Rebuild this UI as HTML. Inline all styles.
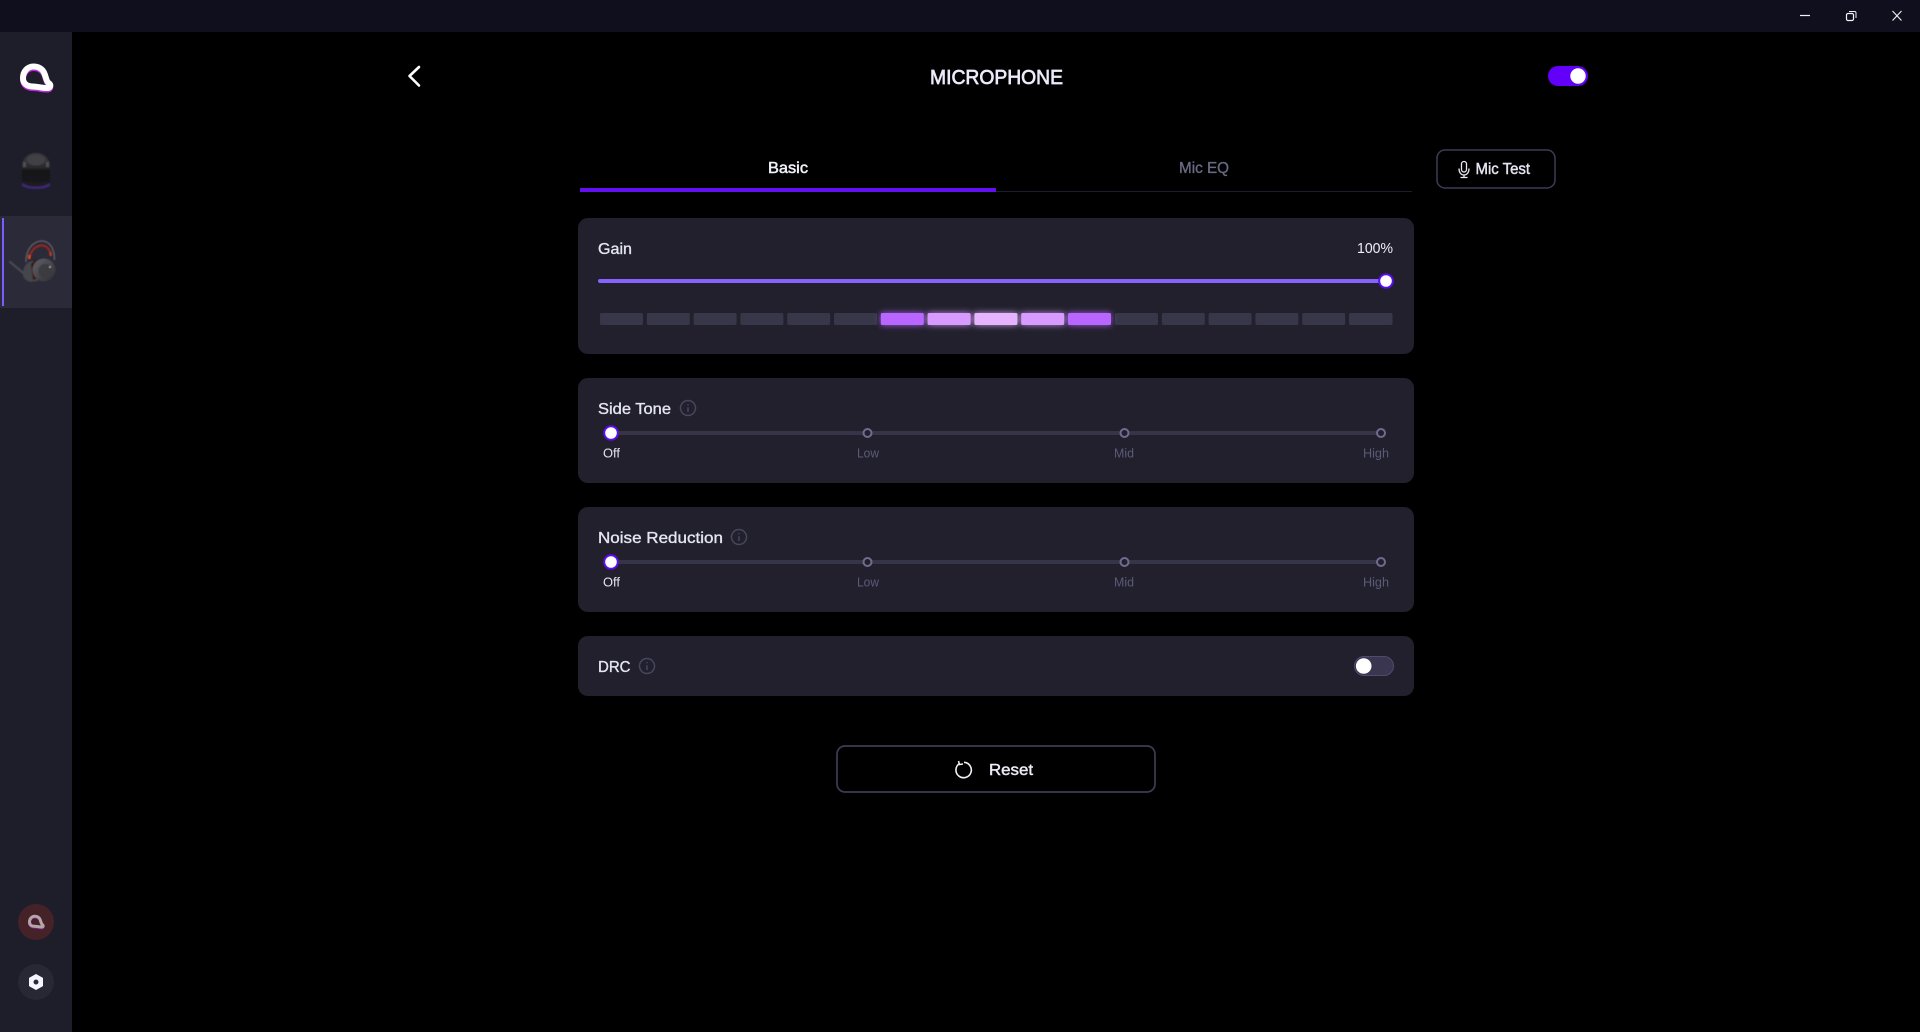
<!DOCTYPE html>
<html lang="en">
<head>
<meta charset="utf-8">
<title>Microphone</title>
<style>
html,body{margin:0;padding:0;background:#000;width:1920px;height:1032px;overflow:hidden}
svg{display:block}
text{font-family:"Liberation Sans",sans-serif}
.m{stroke-width:.35}
</style>
</head>
<body>
<svg width="1920" height="1032" viewBox="0 0 1920 1032" xmlns="http://www.w3.org/2000/svg">
<defs>
<filter id="g" x="-40%" y="-120%" width="180%" height="340%"><feGaussianBlur stdDeviation="3.500"/></filter>
<filter id="b1" x="-20%" y="-20%" width="140%" height="140%"><feGaussianBlur stdDeviation=".5"/></filter>
<linearGradient id="sp" x1="0" y1="0" x2="0" y2="1"><stop offset="0" stop-color="#38383c"/><stop offset=".42" stop-color="#2a2a2e"/><stop offset=".55" stop-color="#131316"/><stop offset="1" stop-color="#1d1d22"/></linearGradient>
<linearGradient id="cup" x1="0" y1="0" x2="1" y2="1"><stop offset="0" stop-color="#626268"/><stop offset="1" stop-color="#2c2c31"/></linearGradient>
<path id="logo" d="M33.500 66.500C27.500 66.500 23 71.500 23 78C23 84 27.500 86.500 33 86.500C38 86.500 43.500 88.500 48 88C51 87.500 51 84.500 48.500 83C46 81 46 76.500 44 72.500C42 68.500 38 66.500 33.500 66.500Z" fill="none" stroke-width="6" stroke-linejoin="round"/>
<path id="info" d="M0-7.500a7.500 7.500 0 1 0 .01 0ZM0-3.900v1.200M0-.8v4.800" fill="none" stroke="#47465e" stroke-width="1.500"/>
</defs>
<rect width="1920" height="1032" fill="#000"/>
<rect width="1920" height="32" fill="#0f0f1e"/>
<rect y="32" width="72" height="1000" fill="#1e1e2a"/>
<rect y="216" width="72" height="92" fill="#2a2a38"/>
<rect x="2" y="218" width="2" height="88" fill="#7b5cff"/>

<!-- window controls -->
<path d="M1800 15.500H1810" stroke="#f2f2f6" stroke-width="1.200"/>
<rect x="1846.500" y="13.500" width="7" height="7" rx="1.500" fill="none" stroke="#f2f2f6" stroke-width="1.200"/>
<path d="M1849 11.500H1854.500Q1856 11.500 1856 13V18" fill="none" stroke="#f2f2f6" stroke-width="1"/>
<path d="M1892.500 11L1901.500 20.500M1901.500 11L1892.500 20.500" stroke="#f2f2f6" stroke-width="1.100"/>

<!-- logo -->
<use href="#logo" stroke="#c026e0" transform="translate(0 1.500)"/>
<use href="#logo" stroke="#fff"/>

<!-- speaker -->
<g filter="url(#b1)">
<ellipse cx="36" cy="185" rx="14.500" ry="4" fill="#4a2a90" opacity=".7"/>
<path d="M22 166C22 158 28 153 36 153C44 153 50 158 50 166V180C50 184.500 44 186.500 36 186.500C28 186.500 22 184.500 22 180Z" fill="url(#sp)"/>
<ellipse cx="36" cy="160" rx="9.500" ry="5.500" fill="#3f3f44"/>
<rect x="23" y="162" width="3" height="5" fill="#4d4d52"/><rect x="46" y="162" width="3" height="5" fill="#4d4d52"/>
</g>

<!-- headset -->
<g filter="url(#b1)">
<path d="M10 262L27 276" stroke="#4a4a50" stroke-width="2.200" stroke-linecap="round"/>
<path d="M26 262C26 248 34 241 42 241C50 241 54.500 249 54.500 260" fill="none" stroke="#5c5c63" stroke-width="1.500"/>
<path d="M29.500 258C31 250 36 245.500 42 245.500C47 245.500 50 250 51 256" fill="none" stroke="#8a2626" stroke-width="2.500"/>
<rect x="28" y="255" width="2.500" height="4" fill="#d84a1f"/>
<rect x="49.500" y="252" width="2" height="4" fill="#b84020"/>
<path d="M23 272C24 264 29 261 33 261L38 264V281L31 282C26 281 22 278 23 272Z" fill="#45454b"/>
<path d="M31 264L36 259L39 278L33 280Z" fill="#3c1616"/>
<ellipse cx="44" cy="270" rx="11.500" ry="11.500" fill="url(#cup)"/>
<ellipse cx="45.500" cy="271" rx="7" ry="7" fill="#3a3a3f"/>
<circle cx="50" cy="267" r="1" fill="#aaa"/>
</g>

<!-- sidebar bottom -->
<circle cx="36" cy="922" r="18" fill="#452227"/>
<g transform="translate(36 922) scale(.5) translate(-36 -78)"><use href="#logo" stroke="#8a1fa0" transform="translate(0 1.500)"/><use href="#logo" stroke="#b3a6a6"/></g>
<circle cx="36" cy="982" r="18" fill="#282835"/>
<path fill-rule="evenodd" d="M36 974.500L42.500 978.200V985.800L36 989.500L29.500 985.800V978.200ZM36 979A3 3 0 1 0 36.010 979Z" fill="#f6f5ff" stroke="#f6f5ff" stroke-width="1" stroke-linejoin="round"/>

<!-- header -->
<path d="M419 67L409.500 76L419 85.500" fill="none" stroke="#fff" stroke-width="2.600" stroke-linecap="round" stroke-linejoin="round"/>
<text x="930" y="84" font-size="20" textLength="133" lengthAdjust="spacingAndGlyphs" fill="#ecebfa" stroke="#ecebfa" stroke-width=".7">MICROPHONE</text>
<rect x="1548" y="66" width="40" height="20" rx="10" fill="#6200fa"/>
<circle cx="1578" cy="76" r="7.700" fill="#fff"/>

<!-- tabs -->
<rect x="580" y="191" width="832" height="1" fill="#1e1e2a"/>
<rect x="580" y="188" width="416" height="4" fill="#6210f0"/>
<text x="768" y="173" font-size="16" textLength="40" lengthAdjust="spacingAndGlyphs" fill="#f0f0fa" stroke="#f0f0fa" stroke-width=".5">Basic</text>
<text x="1179" y="173" font-size="16" textLength="50" lengthAdjust="spacingAndGlyphs" fill="#6b6a85" stroke="#6b6a85" class="m">Mic EQ</text>

<!-- mic test -->
<rect x="1437" y="150" width="118" height="38" rx="8" fill="none" stroke="#3e3c55" stroke-width="1.500"/>
<rect x="1461.500" y="161.500" width="5" height="10.500" rx="2.500" fill="none" stroke="#e8e8f2" stroke-width="1.300"/>
<path d="M1459 168.500C1459 172.500 1461 175 1464 175C1467 175 1469 172.500 1469 168.500M1464 175V177.500M1460.500 177.500H1467.500" fill="none" stroke="#e8e8f2" stroke-width="1.300"/>
<text x="1475.500" y="174" font-size="15.500" textLength="54.500" lengthAdjust="spacingAndGlyphs" fill="#e4e4f2" stroke="#e4e4f2" stroke-width=".45">Mic Test</text>

<!-- gain card -->
<rect x="578" y="218" width="836" height="136" rx="10" fill="#21202c"/>
<text x="598" y="254" font-size="16" textLength="34" lengthAdjust="spacingAndGlyphs" fill="#e6e6f2" stroke="#e6e6f2" class="m">Gain</text>
<text x="1357" y="253" font-size="15" textLength="36" lengthAdjust="spacingAndGlyphs" fill="#eeeef6">100%</text>
<rect x="598" y="279" width="788" height="4" rx="2" fill="#8662ff"/>
<circle cx="1386" cy="281" r="6.800" fill="#fff" stroke="#5a0df0" stroke-width="2"/>

<g fill="#373749">
<rect x="600" y="313" width="43" height="12" rx="1.500"/><rect x="646.800" y="313" width="43" height="12" rx="1.500"/><rect x="693.600" y="313" width="43" height="12" rx="1.500"/><rect x="740.400" y="313" width="43" height="12" rx="1.500"/><rect x="787.200" y="313" width="43" height="12" rx="1.500"/><rect x="834" y="313" width="43" height="12" rx="1.500"/>
<rect x="1115" y="313" width="43" height="12" rx="1.500"/><rect x="1161.800" y="313" width="43" height="12" rx="1.500"/><rect x="1208.600" y="313" width="43" height="12" rx="1.500"/><rect x="1255.400" y="313" width="43" height="12" rx="1.500"/><rect x="1302.200" y="313" width="43" height="12" rx="1.500"/><rect x="1349" y="313" width="43.500" height="12" rx="1.500"/>
</g>
<g filter="url(#g)" opacity=".85">
<rect x="880.800" y="313" width="43" height="12" fill="#b866ff"/><rect x="927.600" y="313" width="43" height="12" fill="#d79aff"/><rect x="974.400" y="313" width="43" height="12" fill="#e6b3ff"/><rect x="1021.200" y="313" width="43" height="12" fill="#d79aff"/><rect x="1068" y="313" width="43" height="12" fill="#b866ff"/>
</g>
<rect x="880.800" y="313" width="43" height="12" rx="1.500" fill="#b866ff"/><rect x="927.600" y="313" width="43" height="12" rx="1.500" fill="#d79aff"/><rect x="974.400" y="313" width="43" height="12" rx="1.500" fill="#e6b3ff"/><rect x="1021.200" y="313" width="43" height="12" rx="1.500" fill="#d79aff"/><rect x="1068" y="313" width="43" height="12" rx="1.500" fill="#b866ff"/>

<!-- side tone -->
<rect x="578" y="378" width="836" height="105" rx="10" fill="#21202c"/>
<text x="598" y="414" font-size="16" textLength="73" lengthAdjust="spacingAndGlyphs" fill="#e6e6f2" stroke="#e6e6f2" class="m">Side Tone</text>
<use href="#info" x="688" y="408"/>
<rect x="611" y="431" width="770" height="4" rx="2" fill="#363547"/>
<circle cx="867.500" cy="433" r="4" fill="#21202c" stroke="#6f6c90" stroke-width="2"/>
<circle cx="1124.500" cy="433" r="4" fill="#21202c" stroke="#6f6c90" stroke-width="2"/>
<circle cx="1381" cy="433" r="4" fill="#21202c" stroke="#6f6c90" stroke-width="2"/>
<circle cx="611" cy="433" r="6.800" fill="#fff" stroke="#5a0df0" stroke-width="2"/>
<text x="603" y="457.500" font-size="13" textLength="17" lengthAdjust="spacingAndGlyphs" fill="#e4e4f0">Off</text>
<text x="857" y="457.500" font-size="13" textLength="22" lengthAdjust="spacingAndGlyphs" fill="#5c5a7a">Low</text>
<text x="1114" y="457.500" font-size="13" textLength="20" lengthAdjust="spacingAndGlyphs" fill="#5c5a7a">Mid</text>
<text x="1363" y="457.500" font-size="13" textLength="26" lengthAdjust="spacingAndGlyphs" fill="#5c5a7a">High</text>

<!-- noise reduction -->
<rect x="578" y="507" width="836" height="105" rx="10" fill="#21202c"/>
<text x="598" y="543" font-size="16" textLength="125" lengthAdjust="spacingAndGlyphs" fill="#e6e6f2" stroke="#e6e6f2" class="m">Noise Reduction</text>
<use href="#info" x="739" y="537"/>
<rect x="611" y="560" width="770" height="4" rx="2" fill="#363547"/>
<circle cx="867.500" cy="562" r="4" fill="#21202c" stroke="#6f6c90" stroke-width="2"/>
<circle cx="1124.500" cy="562" r="4" fill="#21202c" stroke="#6f6c90" stroke-width="2"/>
<circle cx="1381" cy="562" r="4" fill="#21202c" stroke="#6f6c90" stroke-width="2"/>
<circle cx="611" cy="562" r="6.800" fill="#fff" stroke="#5a0df0" stroke-width="2"/>
<text x="603" y="586.500" font-size="13" textLength="17" lengthAdjust="spacingAndGlyphs" fill="#e4e4f0">Off</text>
<text x="857" y="586.500" font-size="13" textLength="22" lengthAdjust="spacingAndGlyphs" fill="#5c5a7a">Low</text>
<text x="1114" y="586.500" font-size="13" textLength="20" lengthAdjust="spacingAndGlyphs" fill="#5c5a7a">Mid</text>
<text x="1363" y="586.500" font-size="13" textLength="26" lengthAdjust="spacingAndGlyphs" fill="#5c5a7a">High</text>

<!-- DRC -->
<rect x="578" y="636" width="836" height="60" rx="10" fill="#21202c"/>
<text x="598" y="672" font-size="16" textLength="32.500" lengthAdjust="spacingAndGlyphs" fill="#e6e6f2" stroke="#e6e6f2" class="m">DRC</text>
<use href="#info" x="647" y="666"/>
<rect x="1354.500" y="656.500" width="39" height="19" rx="9.500" fill="#3a3650" stroke="#4f4a70" stroke-width="1"/>
<circle cx="1363.700" cy="666" r="7.800" fill="#fff"/>

<!-- reset -->
<rect x="837" y="746" width="318" height="46" rx="8" fill="none" stroke="#3e3c55" stroke-width="1.700"/>
<path d="M959.500 763.500A7.700 7.700 0 1 0 964 762.300" fill="none" stroke="#f0f0f8" stroke-width="1.600"/>
<path d="M958.500 761L959.500 764.500L963 764" fill="none" stroke="#f0f0f8" stroke-width="1.500"/>
<text x="989" y="775" font-size="16" textLength="44" lengthAdjust="spacingAndGlyphs" fill="#ecebf6" stroke="#ecebf6" stroke-width=".45">Reset</text>
</svg>
</body>
</html>
